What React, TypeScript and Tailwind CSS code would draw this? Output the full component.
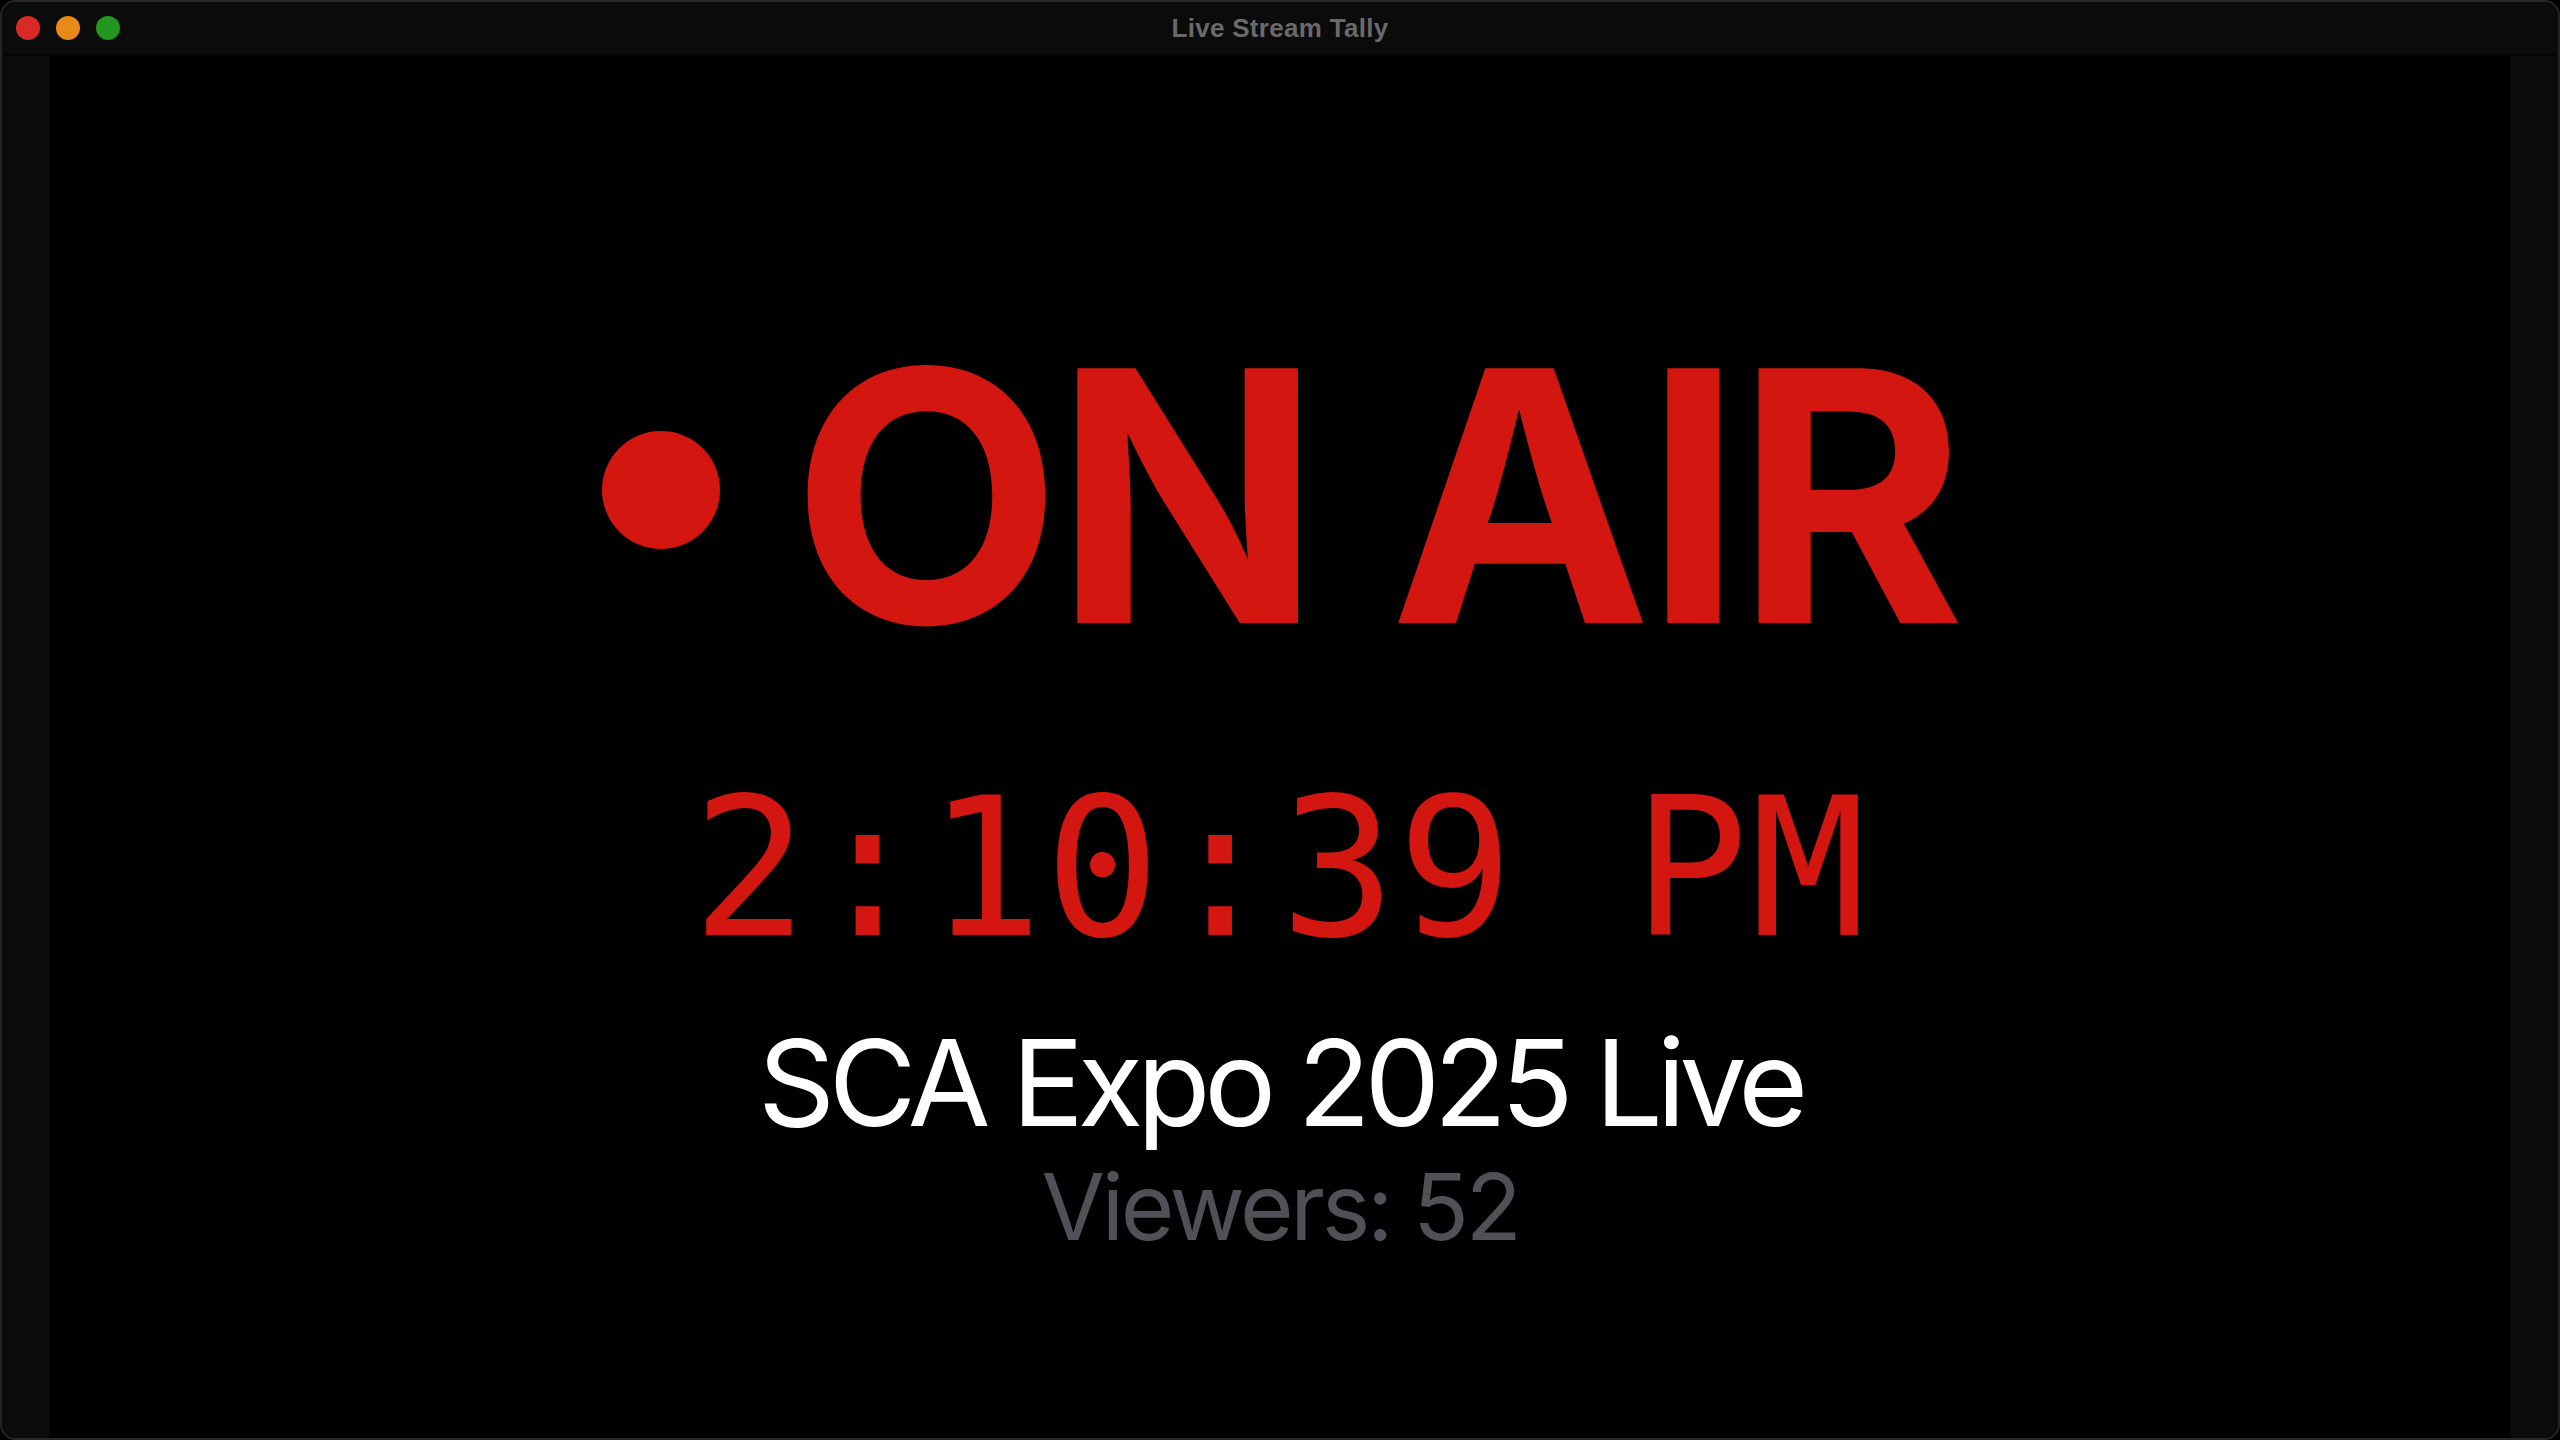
import React from "react";

export default function App() {
  return (
    <div className="w-[2560px] h-[1440px] bg-black overflow-hidden">
      <div className="w-full h-full flex flex-col rounded-[16px] border-2 border-[#262626] overflow-hidden bg-black">
        <div className="h-[54px] shrink-0 bg-[#0b0b0b] border-b-2 border-[#030303] grid grid-cols-[1fr_auto_1fr] items-center">
          <div className="flex items-center gap-[16px] pl-[14px]">
            <div className="w-[24px] h-[24px] rounded-full bg-[#d92a25]" />
            <div className="w-[24px] h-[24px] rounded-full bg-[#e88a19]" />
            <div className="w-[24px] h-[24px] rounded-full bg-[#22961e]" />
          </div>
          <div
            className="text-[26px] font-bold text-[#6a6a6a] tracking-[0.3px]"
            style={{ fontFamily: '"Liberation Sans", Arial, sans-serif' }}
          >
            Live Stream Tally
          </div>
          <div />
        </div>
        <div className="flex-1 flex">
          <div className="w-[48px] bg-[#0b0b0b]" />
          <main className="flex-1 flex flex-col items-center pt-[265px]">
            <div className="flex items-center gap-[72px]">
              <div className="w-[118px] h-[118px] rounded-full bg-[#d31710] -mt-[12px]" />
              <div
                className="text-[350px] font-bold leading-none text-[#d31710] tracking-[-0.02em]"
                style={{ fontFamily: 'Inter, "Noto Sans", sans-serif' }}
              >
                ON AIR
              </div>
            </div>
            <div
              className="mt-[102px] text-[192px] leading-none text-[#d31710] tracking-[2px]"
              style={{ fontFamily: '"DejaVu Sans Mono", "Liberation Mono", monospace' }}
            >
              2:10:39 PM
            </div>
            <div
              className="mt-[58px] text-[120px] leading-none text-white tracking-[-0.052em]"
              style={{ fontFamily: 'Inter, "Liberation Sans", sans-serif' }}
            >
              SCA Expo 2025 Live
            </div>
            <div
              className="mt-[18px] text-[92px] leading-none text-[#505057] tracking-[-0.035em]"
              style={{ fontFamily: 'Inter, "Liberation Sans", sans-serif' }}
            >
              Viewers: 52
            </div>
          </main>
          <div className="w-[48px] bg-[#0b0b0b]" />
        </div>
      </div>
    </div>
  );
}
